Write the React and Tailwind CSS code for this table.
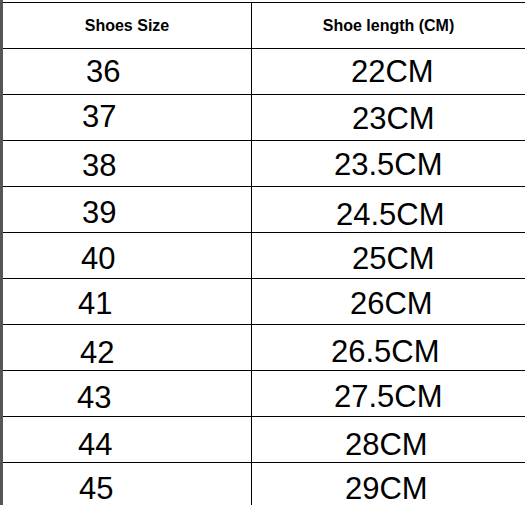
const rows = [
  { size: '36', len: '22CM', a: 'pl-[83px] pt-[7px]', b: 'pl-[99px] pt-[7px]' },
  { size: '37', len: '23CM', a: 'pl-[79px] pt-[6px]', b: 'pl-[100px] pt-[8px]' },
  { size: '38', len: '23.5CM', a: 'pl-[79px] pt-[9px]', b: 'pl-[82px] pt-[8px]' },
  { size: '39', len: '24.5CM', a: 'pl-[79px] pt-[10px]', b: 'pl-[84px] pt-[12px]' },
  { size: '40', len: '25CM', a: 'pl-[78px] pt-[10px]', b: 'pl-[100px] pt-[10px]' },
  { size: '41', len: '26CM', a: 'pl-[75px] pt-[9px]', b: 'pl-[98px] pt-[9px]' },
  { size: '42', len: '26.5CM', a: 'pl-[77px] pt-[12px]', b: 'pl-[79px] pt-[11px]' },
  { size: '43', len: '27.5CM', a: 'pl-[74px] pt-[11px]', b: 'pl-[82px] pt-[10px]' },
  { size: '44', len: '28CM', a: 'pl-[75px] pt-[12px]', b: 'pl-[93px] pt-[12px]' },
  { size: '45', len: '29CM', a: 'pl-[76px] pt-[10px]', b: 'pl-[93px] pt-[10px]' },
];

export default function App() {
  return (
    <div className="w-[525px] h-[505px] overflow-hidden bg-white flex font-['Liberation_Sans',Arial,sans-serif] text-black">
      <div className="w-[3px] shrink-0 bg-[#555555]" />
      <div className="flex-1 pt-[2px]">
        <div className="flex h-[46px] border-t border-black">
          <div className="w-[248px] flex items-center justify-center text-[16px] font-bold leading-none">
            Shoes Size
          </div>
          <div className="flex-1 border-l border-black flex items-center justify-center text-[16px] font-bold leading-none">
            Shoe length (CM)
          </div>
        </div>
        {rows.map((r) => (
          <div key={r.size} className="flex h-[46px] border-t border-black">
            <div className={`w-[248px] text-[31px] leading-none ${r.a}`}>{r.size}</div>
            <div className={`flex-1 border-l border-black text-[31px] leading-none ${r.b}`}>{r.len}</div>
          </div>
        ))}
      </div>
    </div>
  );
}
